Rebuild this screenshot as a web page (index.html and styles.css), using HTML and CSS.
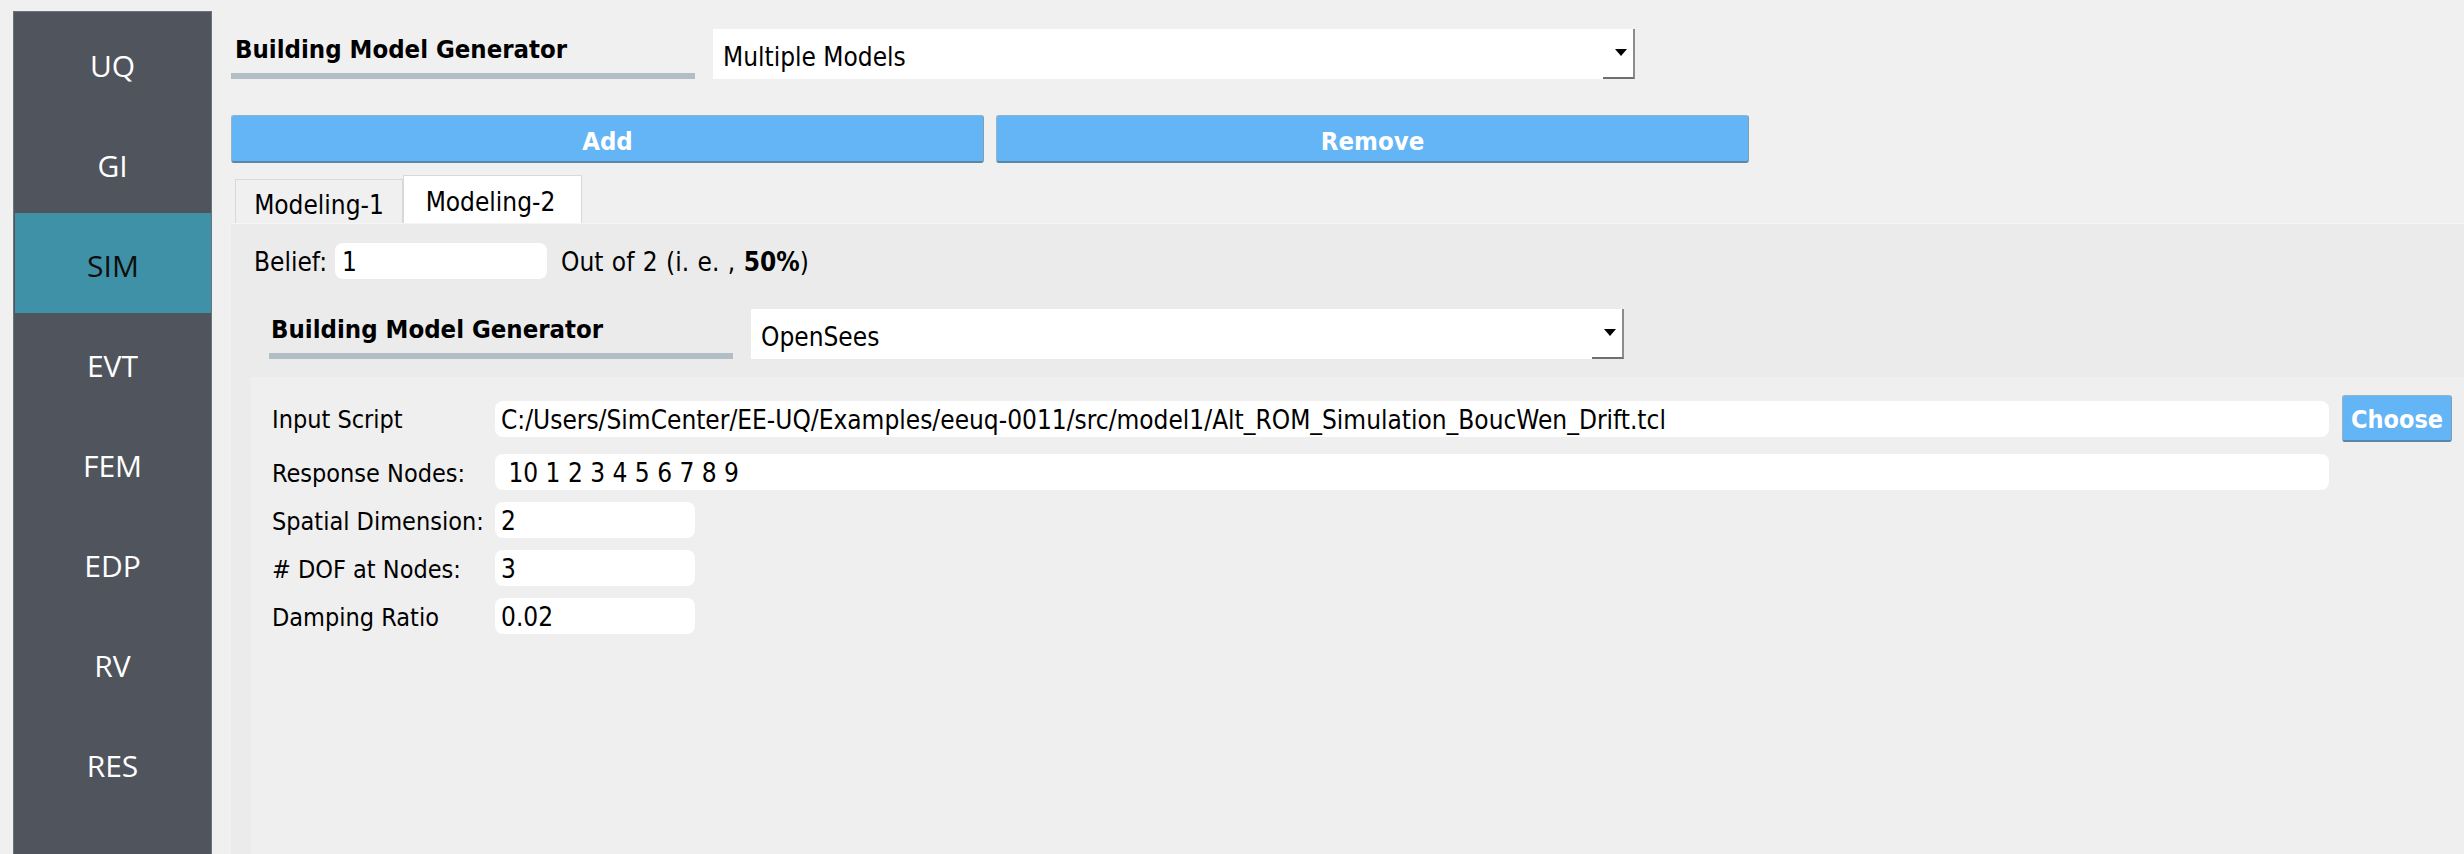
FILE: index.html
```html
<!DOCTYPE html>
<html lang="en">
<head>
<meta charset="utf-8">
<title>Building Model Generator</title>
<link rel="stylesheet" href="styles.css">
</head>
<body>
<div class="app">
  <nav class="sidebar">
    <div class="nav-item">UQ</div>
    <div class="nav-item">GI</div>
    <div class="nav-item active">SIM</div>
    <div class="nav-item">EVT</div>
    <div class="nav-item">FEM</div>
    <div class="nav-item">EDP</div>
    <div class="nav-item">RV</div>
    <div class="nav-item">RES</div>
  </nav>
  <main class="main">
    <div class="gen-row">
      <div class="gen-label">Building Model Generator</div>
      <div class="combo combo-outer">Multiple Models</div>
    </div>
    <div class="btn-row">
      <button class="btn btn-wide">Add</button>
      <button class="btn btn-wide">Remove</button>
    </div>
    <div class="tabs">
      <div class="tab">Modeling-1</div>
      <div class="tab active">Modeling-2</div>
    </div>
    <div class="pane">
      <div class="belief-row">
        <span class="belief-label">Belief:</span>
        <div class="field field-belief">1</div>
        <span class="belief-note">Out of 2 (i. e. , <b>50%</b>)</span>
      </div>
      <div class="gen-row gen-row-inner">
        <div class="gen-label gen-label-inner">Building Model Generator</div>
        <div class="combo combo-inner">OpenSees</div>
      </div>
      <div class="panel">
        <div class="form-grid">
          <div class="label">Input Script</div>
          <div class="field">C:/Users/SimCenter/EE-UQ/Examples/eeuq-0011/src/model1/Alt_ROM_Simulation_BoucWen_Drift.tcl</div>
          <button class="btn btn-choose">Choose</button>

          <div class="label">Response Nodes:</div>
          <div class="field field-pre"> 10 1 2 3 4 5 6 7 8 9</div>
          <div></div>

          <div class="label">Spatial Dimension:</div>
          <div class="field field-short">2</div>
          <div></div>

          <div class="label"># DOF at Nodes:</div>
          <div class="field field-short">3</div>
          <div></div>

          <div class="label">Damping Ratio</div>
          <div class="field field-short">0.02</div>
          <div></div>
        </div>
      </div>
    </div>
  </main>
</div>
</body>
</html>
```
FILE: styles.css
```css
html, body {
  margin: 0;
  padding: 0;
  background: #f0f0f0;
  overflow: hidden;
}

body {
  font-family: "DejaVu Sans Condensed", "DejaVu Sans", sans-serif;
  font-size: 26px;
  color: #000;
}

.app {
  display: flex;
  height: 854px;
}

/* Sidebar */
.sidebar {
  box-sizing: border-box;
  width: 199px;
  margin: 11px 0 0 13px;
  padding-top: 1px;
  background: #50545c;
  border: 1px solid #6e737b;
  border-bottom: none;
  display: flex;
  flex-direction: column;
}

.nav-item {
  height: 100px;
  display: flex;
  align-items: center;
  justify-content: center;
  font-family: "Open Sans", "Noto Sans", sans-serif;
  font-size: 30px;
  color: #ffffff;
  padding-top: 4px;
  box-sizing: border-box;
}

.nav-item.active {
  background: #3f91a7;
  color: #0e0e0e;
  margin-left: 1px;
}

/* Main */
.main {
  flex: 1;
  margin-left: 19px;
  display: flex;
  flex-direction: column;
  min-width: 0;
}

.gen-row {
  display: flex;
  gap: 18px;
  margin-top: 29px;
  height: 50px;
}

.gen-label {
  box-sizing: border-box;
  width: 464px;
  height: 50px;
  padding-left: 4px;
  line-height: 40px;
  font-size: 25.5px;
  font-weight: bold;
  border-bottom: 6px solid #b1bec6;
  white-space: nowrap;
}

.combo {
  position: relative;
  box-sizing: border-box;
  height: 50px;
  background: #ffffff;
  padding-left: 10px;
  line-height: 56px;
}

.combo::after {
  content: "";
  position: absolute;
  right: 0;
  top: 0;
  bottom: 0;
  width: 30px;
  border-right: 2px solid #8c8c8c;
  border-bottom: 2px solid #6f6f6f;
}

.combo::before {
  content: "";
  position: absolute;
  right: 8px;
  top: 20px;
  border-left: 6px solid transparent;
  border-right: 6px solid transparent;
  border-top: 7px solid #000;
}

.combo-outer {
  width: 922px;
}

.combo-inner {
  width: 873px;
}

/* Buttons */
.btn-row {
  display: flex;
  gap: 12px;
  margin-top: 36px;
  height: 48px;
}

.btn {
  box-sizing: border-box;
  font-family: inherit;
  font-size: 25.5px;
  font-weight: bold;
  color: #ffffff;
  background: #64b5f6;
  border: 1px solid #93b3c8;
  border-bottom: 2px solid #5a87a8;
  border-right-color: #7f9fb5;
  border-radius: 3px;
  padding: 4px 0 0 0;
  margin: 0;
}

.btn-wide {
  width: 753px;
  height: 48px;
}

/* Tabs */
.tabs {
  display: flex;
  align-items: flex-end;
  margin-top: 12px;
  margin-left: 4px;
  height: 48px;
}

.tab {
  box-sizing: border-box;
  width: 168px;
  height: 44px;
  background: #f0f0f0;
  border: 1px solid #d9d9d9;
  border-bottom: none;
  display: flex;
  align-items: center;
  justify-content: center;
  padding-top: 7px;
}

.tab.active {
  width: 179px;
  height: 48px;
  background: #ffffff;
  padding-top: 4px;
  padding-right: 4px;
}

/* Pane */
.pane {
  flex: 1;
  background: #ebebeb;
  border-top: 1px solid #f5f5f5;
  padding: 19px 0 0 20px;
  display: flex;
  flex-direction: column;
}

.belief-row {
  display: flex;
  align-items: center;
  height: 36px;
  padding-left: 3px;
}

.belief-label {
  width: 81px;
  padding-top: 2px;
}

.field {
  box-sizing: border-box;
  height: 36px;
  line-height: 39px;
  background: #ffffff;
  border-radius: 8px;
  padding-left: 6px;
  white-space: pre;
  overflow: hidden;
}

.field-belief {
  width: 212px;
  padding-left: 7px;
}

.belief-note {
  margin-left: 14px;
  padding-top: 2px;
  word-spacing: 1px;
}

.gen-row-inner {
  margin-top: 30px;
  margin-left: 18px;
}

.gen-label-inner {
  padding-left: 2px;
}

/* Inner panel */
.panel {
  flex: 1;
  margin-top: 18px;
  background: #efefef;
  padding: 18px 12px 0 21px;
}

.form-grid {
  display: grid;
  grid-template-columns: 210px 1fr 110px;
  grid-template-rows: 47px 36px 36px 36px 36px;
  column-gap: 13px;
  row-gap: 12px;
  align-items: center;
}

.label {
  font-size: 25px;
  line-height: 36px;
  padding-top: 3px;
  white-space: nowrap;
}

.field-short {
  width: 200px;
}

.btn-choose {
  width: 110px;
  height: 47px;
  font-size: 25px;
  padding-top: 2px;
}
```
